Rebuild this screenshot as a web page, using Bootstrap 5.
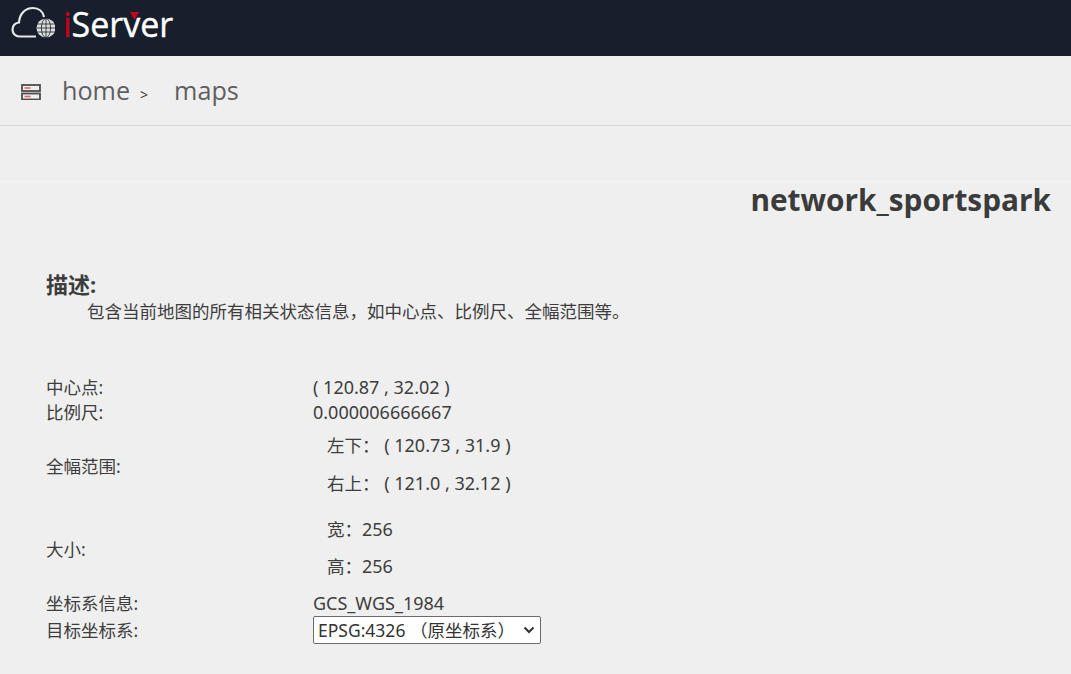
<!DOCTYPE html>
<html lang="zh">
<head>
<meta charset="utf-8">
<title>network_sportspark</title>
<link rel="stylesheet" href="https://cdn.jsdelivr.net/npm/bootstrap@5.3.0/dist/css/bootstrap.min.css">
<style>
body{background:#efefef;color:#3d3d3d;font-family:"Noto Sans","Noto Sans CJK SC",sans-serif;font-size:17.5px;height:674px;overflow:hidden}
.topbar{background:#161f2b;height:56px;padding:6px 0 0 11px;align-items:flex-start}
.logo-box{position:relative;margin-left:8px;height:40px}
.logo-word{font-family:"Open Sans","Liberation Sans",sans-serif;font-size:34px;line-height:36px;color:#fff;font-weight:400;-webkit-text-stroke:.4px #fff;display:block}
.logo-i{color:#c8001a;-webkit-text-stroke:.4px #c8001a}
.logo-tick{position:absolute;left:67px;top:6px}
.crumbbar{height:70px;border-bottom:1px solid #d6d9dc;padding-left:21px;align-items:center;color:#5f5f5f}
.crumbbar a{color:#5f5f5f;text-decoration:none;font-size:25.2px;font-family:"Open Sans",sans-serif;line-height:66px;margin-bottom:2px}
.crumb-sep{font-size:14px;color:#333;margin:7px 26px 0 10px;font-family:"Open Sans",sans-serif}
.crumb-ico{margin:2px 21px 0 0}
.title-band{margin-top:55px;border-top:1px solid #f3f3f3;padding:0 20px 0 0;text-align:right}
.title-band h1{font-size:29.8px;font-weight:700;margin:0;color:#3b3b3b;line-height:36px;font-family:"Open Sans","Noto Sans",sans-serif}
.info-wrap{padding:53px 0 0 46px}
.desc-h{font-size:22px;font-weight:700;line-height:27px;margin:0}
.desc-p{margin:0 0 51px 41px;line-height:26px}
.info-row{display:flex;align-items:center;line-height:25px}
.info-k{width:267px;flex:none}
.num-v{font-size:18px}
.sub-v{display:block;padding-left:14px;line-height:25px}
.sub-v+.sub-v{margin-top:13px}
.pair-a{padding:8px 0 0}
.pair-a .info-k{padding-top:4px}
.pair-b{padding:21px 0 0}
.pair-b .info-k{padding-top:2px}
.pair-b .sub-v+.sub-v{margin-top:12px}
.row-after{margin-top:12px}
.epsg{appearance:none;width:228px;height:28px;border:1px solid #6b6b6b;border-radius:2px;color:#333;font-size:17.5px;padding:0 0 0 4px;font-family:inherit;line-height:26px;background:#fff url("data:image/svg+xml,%3Csvg xmlns='http://www.w3.org/2000/svg' width='12' height='8'%3E%3Cpath d='M1.5 1.5L6 6L10.5 1.5' fill='none' stroke='%23333' stroke-width='2'/%3E%3C/svg%3E") no-repeat right 5px center}
</style>
</head>
<body>
<nav class="d-flex topbar">
<svg width="44" height="32" viewBox="0 0 44 32" fill="none" aria-hidden="true">
<path d="M25 30.5H8.5C4.5 30.5 1.5 27.5 1.5 23.5C1.5 19.5 4.5 16.7 8 16.5C8.6 8 14 2 22 2C28 2 32 6 33 11" stroke="#e8e8e8" stroke-width="2.2"/>
<circle cx="35" cy="22" r="9.5" fill="#dedede"/>
<g stroke="#161f2b" stroke-width=".8"><path d="M26 18H44M26 22H44M26 26H44M35 12V32"/><ellipse cx="35" cy="22" rx="4.6" ry="9.5"/></g>
</svg>
<div class="logo-box">
<span class="logo-word"><span class="logo-i">i</span>Server</span>
<svg class="logo-tick" width="9" height="8" viewBox="0 0 9 8" aria-hidden="true"><path d="M0 0H9L4.5 8Z" fill="#c8001a"/></svg>
</div>
</nav>
<div class="d-flex crumbbar">
<svg class="crumb-ico" width="20" height="16" viewBox="0 0 20 16" aria-hidden="true">
<rect x="1" y="1" width="18" height="6" fill="#efefef" stroke="#4d4d4d" stroke-width="1.8"/>
<rect x="1" y="9.5" width="18" height="6" fill="#efefef" stroke="#4d4d4d" stroke-width="1.8"/>
<rect x="3.5" y="3.2" width="6" height="1.6" fill="#e0676f"/>
<rect x="3.5" y="11.7" width="6" height="1.6" fill="#e0676f"/>
</svg>
<a href="#">home</a><span class="crumb-sep">&gt;</span><a href="#">maps</a>
</div>
<div class="title-band"><h1>network_sportspark</h1></div>
<main class="info-wrap">
<h2 class="desc-h">描述:</h2>
<p class="desc-p">包含当前地图的所有相关状态信息，如中心点、比例尺、全幅范围等。</p>
<div class="info-row"><div class="info-k">中心点:</div><div class="num-v">( 120.87 , 32.02 )</div></div>
<div class="info-row"><div class="info-k">比例尺:</div><div class="num-v">0.000006666667</div></div>
<div class="info-row pair-a"><div class="info-k">全幅范围:</div><div><span class="sub-v">左下：<span class="num-v"> ( 120.73 , 31.9 )</span></span><span class="sub-v">右上：<span class="num-v"> ( 121.0 , 32.12 )</span></span></div></div>
<div class="info-row pair-b"><div class="info-k">大小:</div><div><span class="sub-v">宽：<span class="num-v">256</span></span><span class="sub-v">高：<span class="num-v">256</span></span></div></div>
<div class="info-row row-after"><div class="info-k">坐标系信息:</div><div class="num-v">GCS_WGS_1984</div></div>
<div class="info-row"><div class="info-k">目标坐标系:</div><div><select class="epsg"><option>EPSG:4326 （原坐标系）</option></select></div></div>
</main>
<script src="https://cdn.jsdelivr.net/npm/bootstrap@5.3.0/dist/js/bootstrap.bundle.min.js"></script>
</body>
</html>
